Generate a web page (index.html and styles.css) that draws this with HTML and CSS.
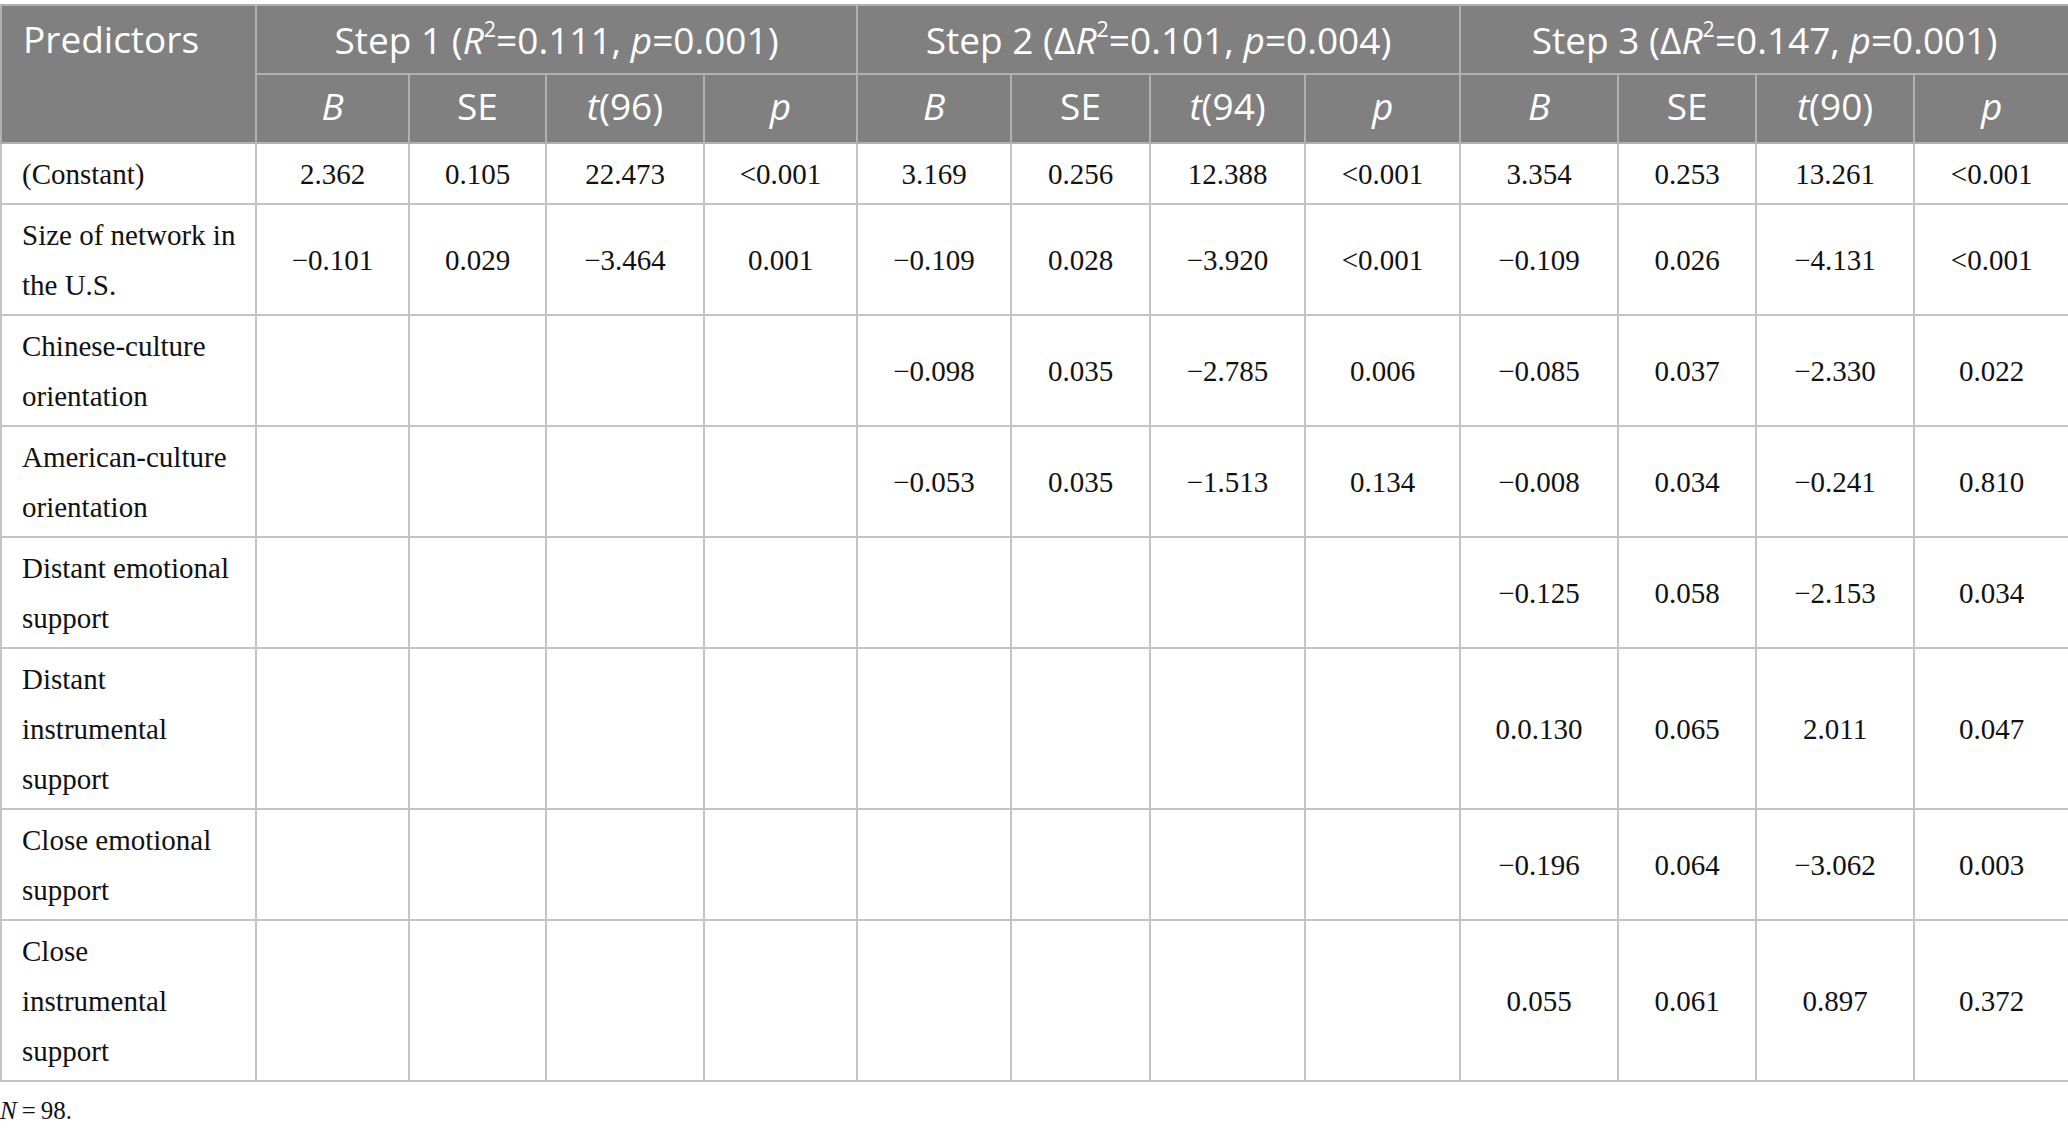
FILE: index.html
```html
<!DOCTYPE html>
<html>
<head>
<meta charset="utf-8">
<link rel="stylesheet" href="styles.css">
</head>
<body>
<table class="reg">
  <colgroup>
    <col class="c-pred">
    <col style="width:153px"><col style="width:137px"><col style="width:158px"><col style="width:153px">
    <col style="width:154px"><col style="width:139px"><col style="width:155px"><col style="width:155px">
    <col style="width:158px"><col style="width:138px"><col style="width:158px"><col style="width:155px">
  </colgroup>
  <thead>
    <tr class="h1">
      <th rowspan="2" class="pred">Predictors</th>
      <th colspan="4">Step 1 (<i>R</i><sup>2</sup>=0.111, <i>p</i>=0.001)</th>
      <th colspan="4">Step 2 (Δ<i>R</i><sup>2</sup>=0.101, <i>p</i>=0.004)</th>
      <th colspan="4">Step 3 (Δ<i>R</i><sup>2</sup>=0.147, <i>p</i>=0.001)</th>
    </tr>
    <tr class="h2">
      <th><i>B</i></th><th>SE</th><th><i>t</i>(96)</th><th><i>p</i></th>
      <th><i>B</i></th><th>SE</th><th><i>t</i>(94)</th><th><i>p</i></th>
      <th><i>B</i></th><th>SE</th><th><i>t</i>(90)</th><th><i>p</i></th>
    </tr>
  </thead>
  <tbody>
    <tr>
      <td class="lbl">(Constant)</td>
      <td>2.362</td><td>0.105</td><td>22.473</td><td>&lt;0.001</td>
      <td>3.169</td><td>0.256</td><td>12.388</td><td>&lt;0.001</td>
      <td>3.354</td><td>0.253</td><td>13.261</td><td>&lt;0.001</td>
    </tr>
    <tr>
      <td class="lbl">Size of network in<br>the U.S.</td>
      <td>−0.101</td><td>0.029</td><td>−3.464</td><td>0.001</td>
      <td>−0.109</td><td>0.028</td><td>−3.920</td><td>&lt;0.001</td>
      <td>−0.109</td><td>0.026</td><td>−4.131</td><td>&lt;0.001</td>
    </tr>
    <tr>
      <td class="lbl">Chinese-culture<br>orientation</td>
      <td></td><td></td><td></td><td></td>
      <td>−0.098</td><td>0.035</td><td>−2.785</td><td>0.006</td>
      <td>−0.085</td><td>0.037</td><td>−2.330</td><td>0.022</td>
    </tr>
    <tr>
      <td class="lbl">American-culture<br>orientation</td>
      <td></td><td></td><td></td><td></td>
      <td>−0.053</td><td>0.035</td><td>−1.513</td><td>0.134</td>
      <td>−0.008</td><td>0.034</td><td>−0.241</td><td>0.810</td>
    </tr>
    <tr>
      <td class="lbl">Distant emotional<br>support</td>
      <td></td><td></td><td></td><td></td>
      <td></td><td></td><td></td><td></td>
      <td>−0.125</td><td>0.058</td><td>−2.153</td><td>0.034</td>
    </tr>
    <tr>
      <td class="lbl">Distant<br>instrumental<br>support</td>
      <td></td><td></td><td></td><td></td>
      <td></td><td></td><td></td><td></td>
      <td>0.0.130</td><td>0.065</td><td>2.011</td><td>0.047</td>
    </tr>
    <tr>
      <td class="lbl">Close emotional<br>support</td>
      <td></td><td></td><td></td><td></td>
      <td></td><td></td><td></td><td></td>
      <td>−0.196</td><td>0.064</td><td>−3.062</td><td>0.003</td>
    </tr>
    <tr>
      <td class="lbl">Close<br>instrumental<br>support</td>
      <td></td><td></td><td></td><td></td>
      <td></td><td></td><td></td><td></td>
      <td>0.055</td><td>0.061</td><td>0.897</td><td>0.372</td>
    </tr>
  </tbody>
</table>
<p class="note"><i>N</i>&#8201;=&#8201;98.</p>
</body>
</html>
```

FILE: styles.css
```css
html, body {
  margin: 0;
  padding: 0;
  background: #ffffff;
}

.reg {
  width: 2068px;
  margin-top: 4px;
  border-collapse: collapse;
  table-layout: fixed;
  font-family: "Liberation Serif", "Times New Roman", serif;
  color: #111111;
}

.c-pred {
  width: 255px;
}

.reg th {
  background: #808080;
  color: #ffffff;
  font-family: "Open Sans", "Noto Sans", sans-serif;
  font-weight: 400;
  font-size: 37px;
  line-height: 50px;
  text-align: center;
  border: 2px solid #b0b0b0;
  white-space: nowrap;
}

.reg thead tr.h1 th {
  padding: 9px 10px 8px;
}

.reg thead tr.h2 th {
  padding: 6px 10px 11px;
}

.reg thead tr.h1 th.pred {
  text-align: left;
  vertical-align: top;
  padding: 8px 10px 7px 21px;
}

.reg th sup {
  font-size: 0.58em;
  line-height: 0;
  vertical-align: 0.8em;
}

.reg td {
  font-size: 29px;
  line-height: 50px;
  padding: 4.5px 10px 4.5px;
  text-align: center;
  vertical-align: middle;
  border: 2px solid #c4c4c4;
  white-space: nowrap;
}

.reg td.lbl {
  text-align: left;
  padding-left: 20px;
}

.note {
  margin: 14px 0 0;
  font-family: "Liberation Serif", "Times New Roman", serif;
  font-size: 25px;
  line-height: 30px;
  color: #111111;
}
```
